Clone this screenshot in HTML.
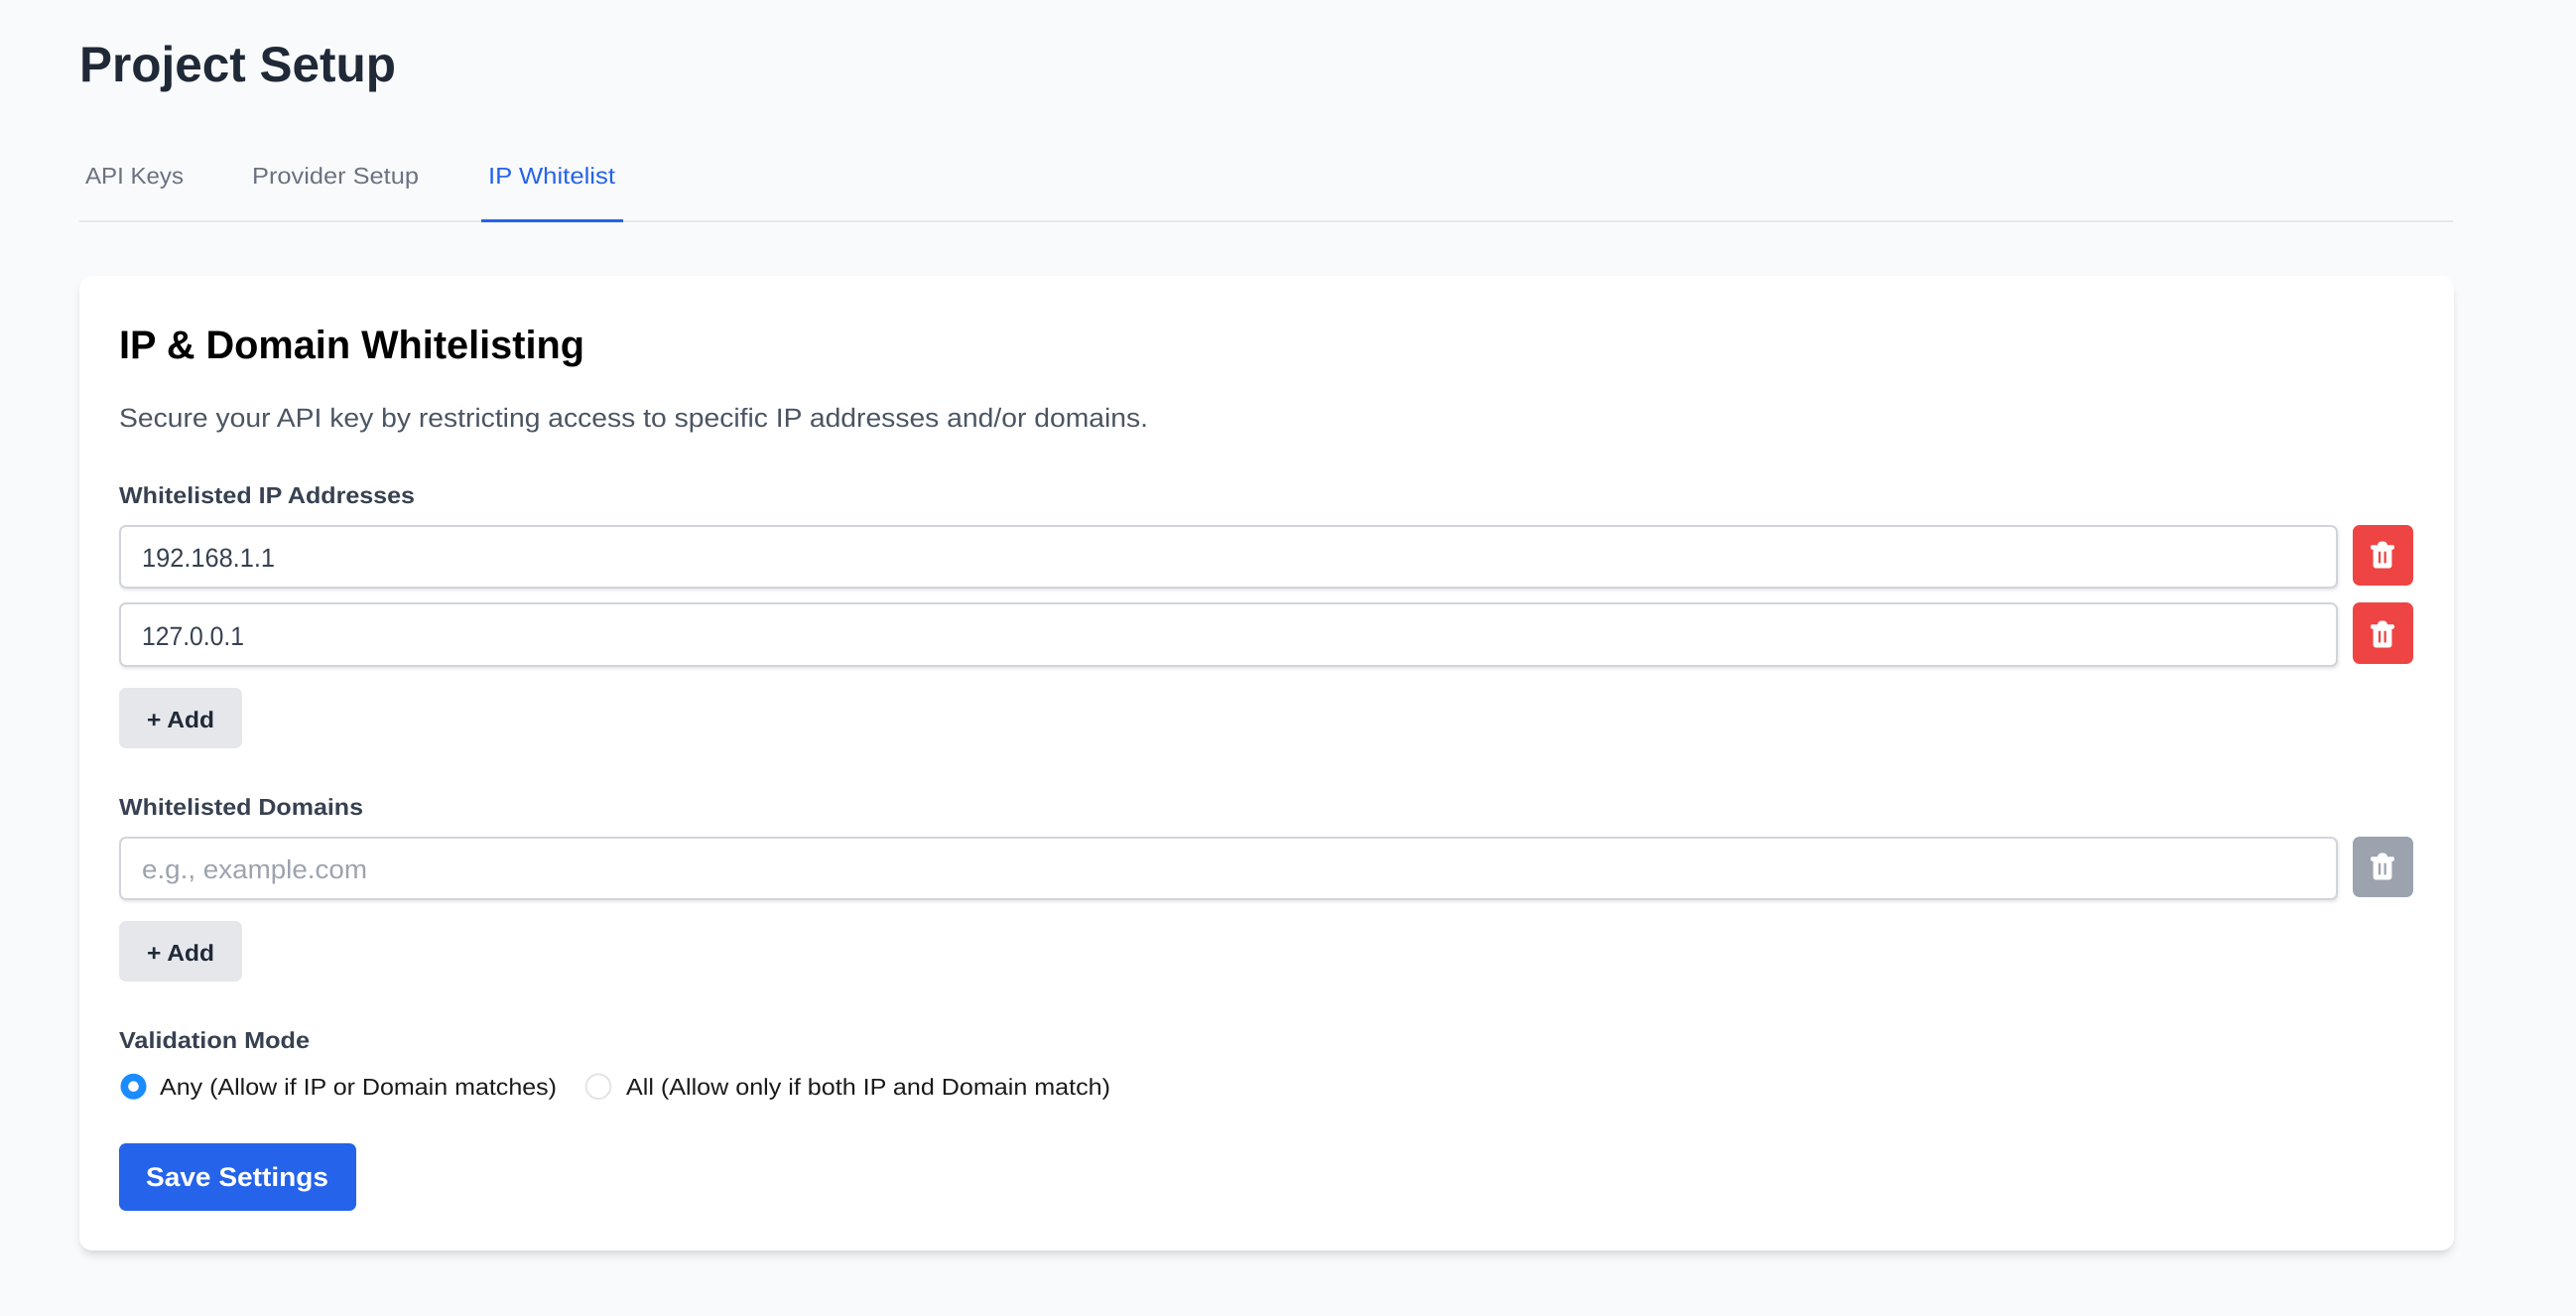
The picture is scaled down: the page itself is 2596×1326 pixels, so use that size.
<!DOCTYPE html>
<html lang="en">
<head>
<meta charset="utf-8">
<title>Project Setup</title>
<style>
html,body{margin:0;padding:0;width:2596px;height:1326px;overflow:hidden;background:#f9fafb}
.b{position:absolute;box-sizing:border-box}
.card{left:80px;top:278px;width:2393px;height:982px;background:#fff;border-radius:13px;box-shadow:0 7px 10px -2px rgba(0,0,0,.1),0 3px 7px -3px rgba(0,0,0,.1)}
.inp{left:120px;width:2236px;background:#fff;border:2px solid #d1d5db;border-radius:7px;box-shadow:1px 2px 3px rgba(0,0,0,.1)}
.del{left:2371px;width:61px;border-radius:7px;background:#ef4444}
.add{left:120px;width:124px;height:61px;border-radius:7px;background:#e5e7eb}
svg{position:absolute;left:0;top:0;filter:blur(.35px)}
text{font-family:"Liberation Sans",sans-serif;white-space:pre}
.s{font-size:23.2px;text-rendering:geometricPrecision}
.m{font-size:26.5px;text-rendering:geometricPrecision}
</style>
</head>
<body>
<div class="b" style="left:80px;top:222px;width:2392px;height:2px;background:#e5e7eb"></div>
<div class="b" style="left:485px;top:221px;width:143px;height:3px;background:#2563eb"></div>
<div class="b card"></div>
<div class="b inp" style="top:529px;height:64px"></div>
<div class="b inp" style="top:607px;height:65px"></div>
<div class="b inp" style="top:843px;height:64px"></div>
<div class="b del" style="top:529px;height:61px"></div>
<div class="b del" style="top:607px;height:62px"></div>
<div class="b del" style="top:843px;height:61px;background:#9ca3af"></div>
<div class="b add" style="top:693px"></div>
<div class="b add" style="top:928px"></div>
<div class="b" style="left:120px;top:1152px;width:239px;height:68px;border-radius:7px;background:#2563eb"></div>

<svg width="2596" height="1326" viewBox="0 0 2596 1326" xmlns="http://www.w3.org/2000/svg">
<text x="80" y="82" font-size="49.7" font-weight="700" fill="#1f2937" textLength="319" lengthAdjust="spacingAndGlyphs">Project Setup</text>
<text class="s" x="86" y="185" fill="#6b7280" textLength="99" lengthAdjust="spacingAndGlyphs">API Keys</text>
<text class="s" x="254" y="185" fill="#6b7280" textLength="168" lengthAdjust="spacingAndGlyphs">Provider Setup</text>
<text class="s" x="492" y="185" fill="#2563eb" textLength="128" lengthAdjust="spacingAndGlyphs">IP Whitelist</text>
<text x="120" y="361" font-size="39.7" font-weight="700" fill="#000" textLength="469" lengthAdjust="spacingAndGlyphs">IP &amp; Domain Whitelisting</text>
<text class="m" x="120" y="430" fill="#4b5563" textLength="1037" lengthAdjust="spacingAndGlyphs">Secure your API key by restricting access to specific IP addresses and/or domains.</text>
<text class="s" x="120" y="507" font-weight="700" fill="#374151" textLength="298" lengthAdjust="spacingAndGlyphs">Whitelisted IP Addresses</text>
<text class="m" x="143" y="571" fill="#374151" textLength="134" lengthAdjust="spacingAndGlyphs">192.168.1.1</text>
<text class="m" x="143" y="650" fill="#374151" textLength="103" lengthAdjust="spacingAndGlyphs">127.0.0.1</text>
<text class="s" x="148" y="733" font-weight="700" fill="#1f2937" textLength="68" lengthAdjust="spacingAndGlyphs">+ Add</text>
<text class="s" x="120" y="821" font-weight="700" fill="#374151" textLength="246" lengthAdjust="spacingAndGlyphs">Whitelisted Domains</text>
<text class="m" x="143" y="885" fill="#9ca3af" textLength="227" lengthAdjust="spacingAndGlyphs">e.g., example.com</text>
<text class="s" x="148" y="968" font-weight="700" fill="#1f2937" textLength="68" lengthAdjust="spacingAndGlyphs">+ Add</text>
<text class="s" x="120" y="1056" font-weight="700" fill="#374151" textLength="192" lengthAdjust="spacingAndGlyphs">Validation Mode</text>
<text class="s" x="161" y="1103" fill="#1a1a1a" textLength="400" lengthAdjust="spacingAndGlyphs">Any (Allow if IP or Domain matches)</text>
<text class="s" x="631" y="1103" fill="#1a1a1a" textLength="488" lengthAdjust="spacingAndGlyphs">All (Allow only if both IP and Domain match)</text>
<text x="147" y="1195" font-size="26.5" font-weight="700" fill="#fff" textLength="184" lengthAdjust="spacingAndGlyphs">Save Settings</text>

<circle cx="134.5" cy="1094.7" r="13" fill="#1a8cff"/>
<circle cx="134.5" cy="1094.7" r="5.3" fill="#fff"/>
<circle cx="603" cy="1094.7" r="12.3" fill="#fff" stroke="#e4e4e4" stroke-width="2"/>

<g fill="#fff" fill-rule="evenodd">
<path transform="translate(2389 545.5)" d="M7 3.8 C7.4 1.5 9 0 11 0 H13 C15 0 16.6 1.5 17 3.8 H22.4 C23.6 3.8 24 5 24 6 C24 7 23.4 8.2 22.4 8.2 H21.4 V24 C21.4 25.8 20.2 27 18.4 27 H5.6 C3.8 27 2.6 25.8 2.6 24 V8.2 H1.6 C.6 8.2 0 7 0 6 C0 5 .4 3.8 1.6 3.8 Z M9 10 C8.3 10 7.9 10.5 7.9 11.1 V21 C7.9 21.6 8.3 22.1 9 22.1 C9.7 22.1 10.2 21.6 10.2 21 V11.1 C10.2 10.5 9.7 10 9 10 Z M14.6 10 C13.9 10 13.5 10.5 13.5 11.1 V21 C13.5 21.6 13.9 22.1 14.6 22.1 C15.3 22.1 15.8 21.6 15.8 21 V11.1 C15.8 10.5 15.3 10 14.6 10 Z"/>
<path transform="translate(2389 625.5)" d="M7 3.8 C7.4 1.5 9 0 11 0 H13 C15 0 16.6 1.5 17 3.8 H22.4 C23.6 3.8 24 5 24 6 C24 7 23.4 8.2 22.4 8.2 H21.4 V24 C21.4 25.8 20.2 27 18.4 27 H5.6 C3.8 27 2.6 25.8 2.6 24 V8.2 H1.6 C.6 8.2 0 7 0 6 C0 5 .4 3.8 1.6 3.8 Z M9 10 C8.3 10 7.9 10.5 7.9 11.1 V21 C7.9 21.6 8.3 22.1 9 22.1 C9.7 22.1 10.2 21.6 10.2 21 V11.1 C10.2 10.5 9.7 10 9 10 Z M14.6 10 C13.9 10 13.5 10.5 13.5 11.1 V21 C13.5 21.6 13.9 22.1 14.6 22.1 C15.3 22.1 15.8 21.6 15.8 21 V11.1 C15.8 10.5 15.3 10 14.6 10 Z"/>
<path transform="translate(2389 859.5)" d="M7 3.8 C7.4 1.5 9 0 11 0 H13 C15 0 16.6 1.5 17 3.8 H22.4 C23.6 3.8 24 5 24 6 C24 7 23.4 8.2 22.4 8.2 H21.4 V24 C21.4 25.8 20.2 27 18.4 27 H5.6 C3.8 27 2.6 25.8 2.6 24 V8.2 H1.6 C.6 8.2 0 7 0 6 C0 5 .4 3.8 1.6 3.8 Z M9 10 C8.3 10 7.9 10.5 7.9 11.1 V21 C7.9 21.6 8.3 22.1 9 22.1 C9.7 22.1 10.2 21.6 10.2 21 V11.1 C10.2 10.5 9.7 10 9 10 Z M14.6 10 C13.9 10 13.5 10.5 13.5 11.1 V21 C13.5 21.6 13.9 22.1 14.6 22.1 C15.3 22.1 15.8 21.6 15.8 21 V11.1 C15.8 10.5 15.3 10 14.6 10 Z"/>
</g>
</svg>
</body>
</html>
